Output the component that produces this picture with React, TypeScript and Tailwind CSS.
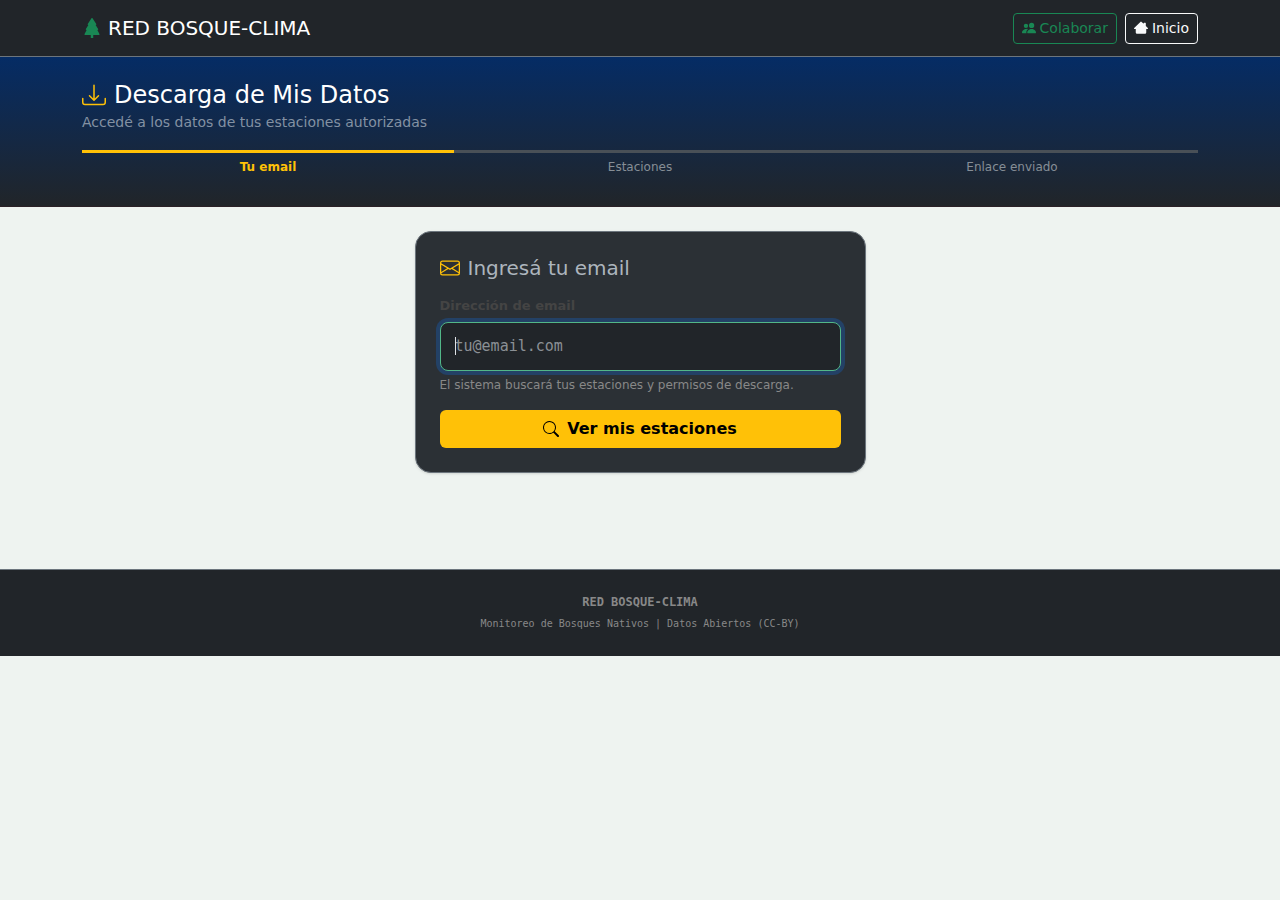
import React, { useState } from 'react';
import { BsDownload, BsEnvelope, BsPeopleFill, BsSearch, BsTreeFill } from 'react-icons/bs';

const STEPS = ['Tu email', 'Estaciones', 'Enlace enviado'];

const HouseIcon: React.FC<{ className?: string }> = ({ className }) => (
  <svg viewBox="0 0 16 16" fill="currentColor" aria-hidden="true" className={className}>
    <path d="M7.3 1a1 1 0 0 1 1.4 0L11 3.2V2.5a.5.5 0 0 1 .5-.5h1.5a.5.5 0 0 1 .5.5v3.3l2.3 2.3a.6.6 0 0 1-.4 1H14v4a1.5 1.5 0 0 1-1.5 1.5h-9A1.5 1.5 0 0 1 2 13.100V9.100H.6a.6.6 0 0 1-.4-1L7.3 1z" />
  </svg>
);

const Navbar: React.FC = () => (
  <nav className="bg-[#212529] border-b border-[#6c757d]">
    <div className="max-w-[1140px] mx-auto px-3 h-14 flex items-center justify-between">
      <a href="#" className="flex items-center gap-1.5 text-xl leading-[30px] text-white">
        <BsTreeFill className="w-5 h-5 text-[#198754]" />
        RED BOSQUE-CLIMA
      </a>
      <div className="flex items-center gap-2">
        <a
          href="#colaborar"
          className="flex items-center gap-1 rounded border border-[#198754] px-2 py-1 text-sm leading-[21px] text-[#198754]"
        >
          <BsPeopleFill className="w-3.5 h-3.5" />
          Colaborar
        </a>
        <a
          href="#inicio"
          className="flex items-center gap-1 rounded border border-[#f8f9fa] px-2 py-1 text-sm leading-[21px] text-[#f8f9fa]"
        >
          <HouseIcon className="w-3.5 h-3.5" />
          Inicio
        </a>
      </div>
    </div>
  </nav>
);

const Hero: React.FC<{ current: number }> = ({ current }) => (
  <header className="bg-linear-to-b/srgb from-[#052c65] to-[#212529] border-b border-[#2b2127]">
    <div className="max-w-[1140px] mx-auto px-3 pt-6 pb-[30px]">
      <h1 className="flex items-center gap-2 text-2xl leading-[28px] text-white">
        <BsDownload className="w-6 h-6 text-[#ffc107]" />
        Descarga de Mis Datos
      </h1>
      <p className="mt-[3px] text-sm leading-[21px] text-[#8391a3]">
        Accedé a los datos de tus estaciones autorizadas
      </p>
      <ol className="mt-[17px] flex text-center text-xs leading-[18px]">
        {STEPS.map((step, i) => (
          <li
            key={step}
            className={`flex-1 border-t-[3px] pt-[5px] ${
              i === current ? 'border-[#ffc107] font-bold text-[#ffc107]' : 'border-[#495057] text-[#868e96]'
            }`}
          >
            {step}
          </li>
        ))}
      </ol>
    </div>
  </header>
);

const EmailCard: React.FC = () => {
  const [email, setEmail] = useState('');

  return (
    <form
      onSubmit={(e) => e.preventDefault()}
      className="w-full max-w-[451px] rounded-2xl border border-[#6c757d] bg-[#2b3035] p-6 shadow-sm"
    >
      <h2 className="flex items-center gap-2 text-xl leading-6 text-[#adb5bd]">
        <BsEnvelope className="w-5 h-5 text-[#ffc107]" />
        Ingresá tu email
      </h2>
      <label htmlFor="email" className="mt-4 block text-[13px] leading-5 font-bold text-[#444444]">
        Dirección de email
      </label>
      <div className="relative mt-1.5">
        <input
          id="email"
          type="email"
          autoFocus
          value={email}
          onChange={(e) => setEmail(e.target.value)}
          placeholder="tu@email.com"
          className="peer block w-full h-[49px] rounded-lg border border-[#495057] bg-[#212529] px-3.5 pb-0.5 font-['DejaVu_Sans_Mono',monospace] text-[15px] text-[#dee2e6] caret-[#dee2e6] placeholder:text-[#8b9095] placeholder-shown:caret-transparent outline-none focus:border-[#52b788] focus:ring-4 focus:ring-[#234166]"
        />
        {/* Caret for the empty field */}
        <span className="pointer-events-none absolute left-[15px] top-[15px] hidden h-[18px] w-px bg-[#dee2e6] peer-placeholder-shown:peer-focus:block" />
      </div>
      <p className="mt-[5px] text-xs leading-[18px] text-[#888888]">
        El sistema buscará tus estaciones y permisos de descarga.
      </p>
      <button
        type="submit"
        className="mt-4 flex w-full items-center justify-center gap-2 rounded-md bg-[#ffc107] h-[38px] text-base font-bold text-black"
      >
        <BsSearch className="w-4 h-4" />
        Ver mis estaciones
      </button>
    </form>
  );
};

const Footer: React.FC = () => (
  <footer className="border-t border-[#6c757d] bg-[#212529] py-6 text-center font-['DejaVu_Sans_Mono',monospace] text-[#888888]">
    <p className="text-xs leading-4 font-bold">RED BOSQUE-CLIMA</p>
    <p className="mt-1.5 text-[10px] leading-4">Monitoreo de Bosques Nativos | Datos Abiertos (CC-BY)</p>
  </footer>
);

const App: React.FC = () => (
  <div className="min-h-screen bg-[#eef3f0] font-['DejaVu_Sans',sans-serif]">
    <Navbar />
    <Hero current={0} />
    <main className="flex justify-center px-3 pt-6 pb-24">
      <EmailCard />
    </main>
    <Footer />
  </div>
);

export default App;
